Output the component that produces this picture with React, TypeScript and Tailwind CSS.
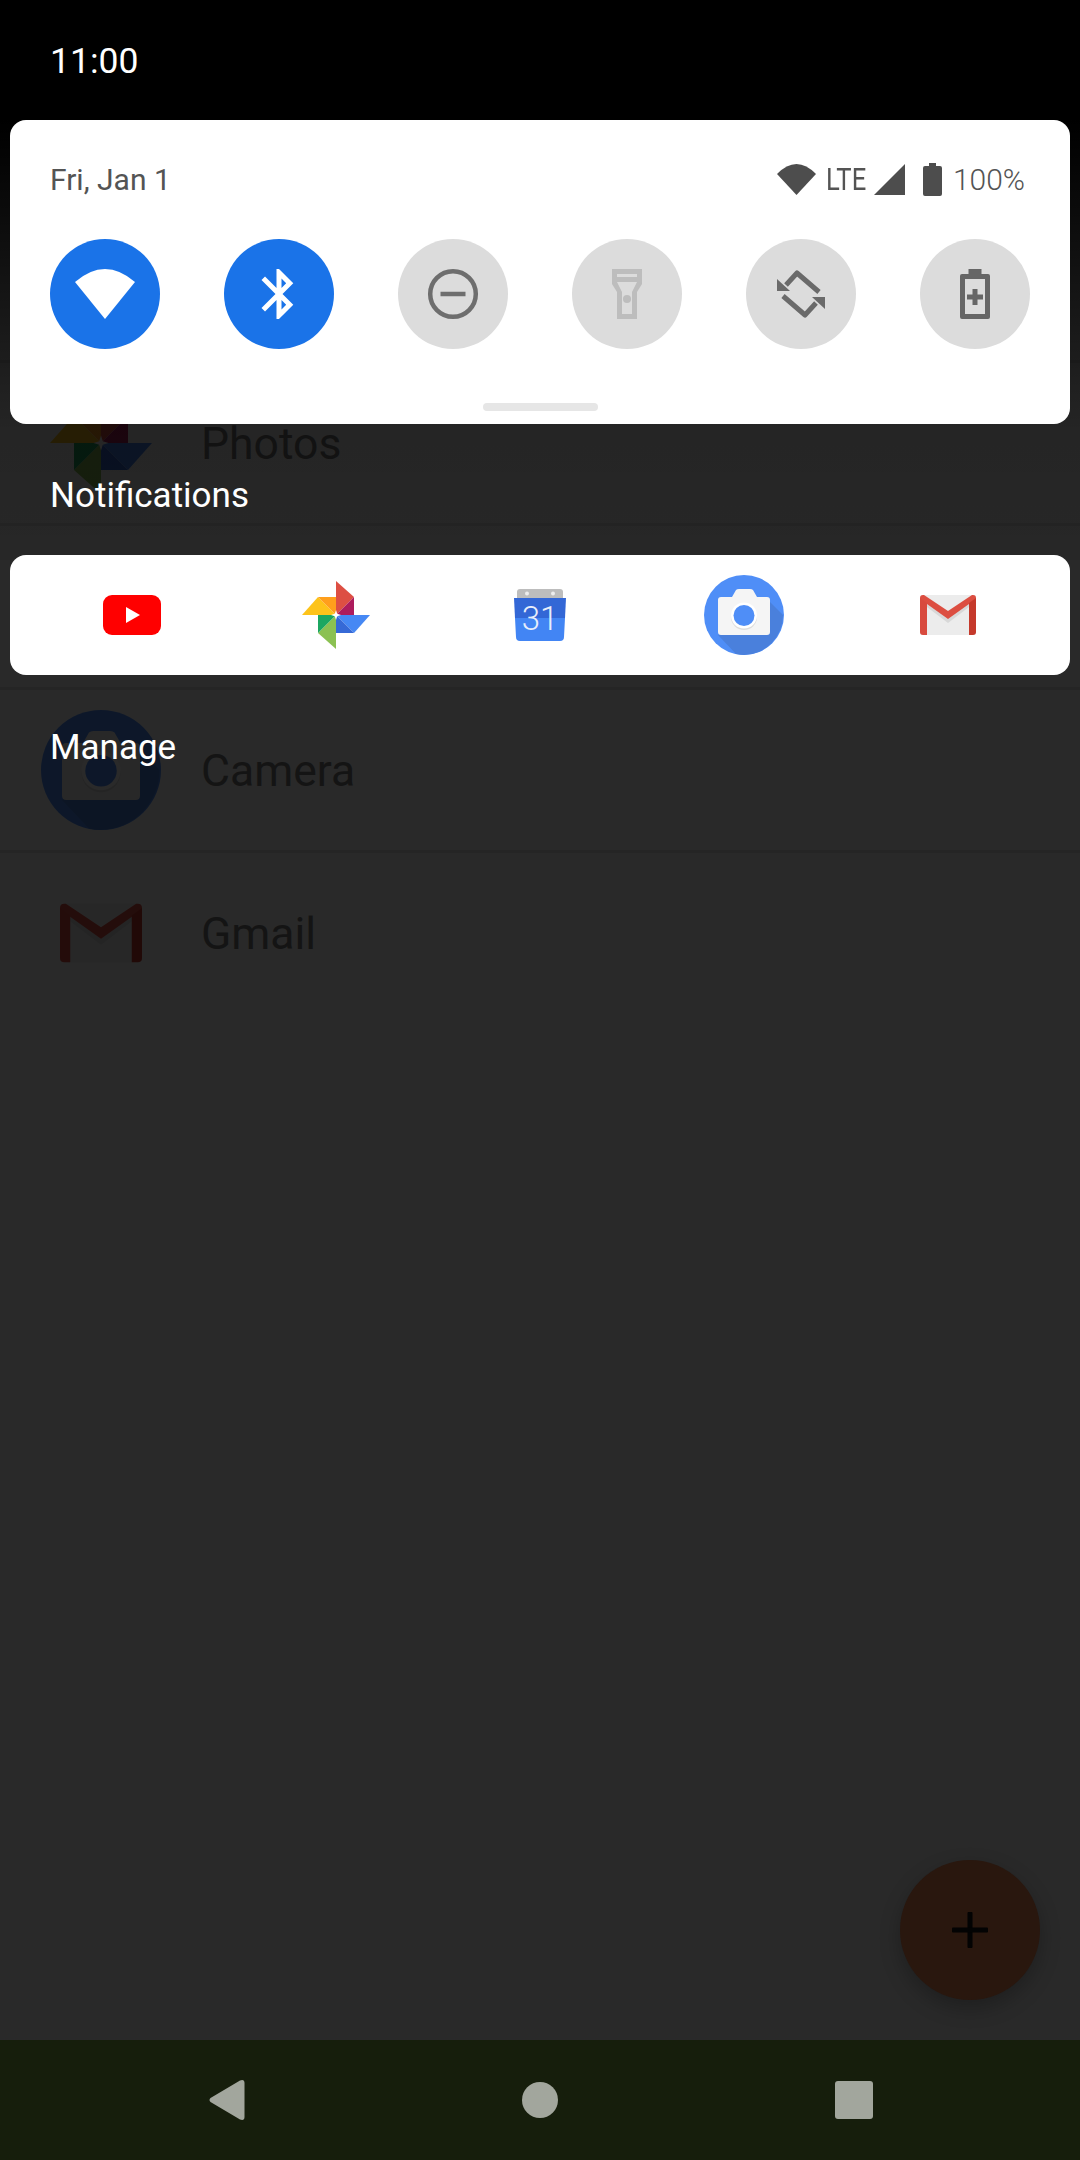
import type { ReactNode } from 'react';

function YouTubeIcon() {
  return (
    <svg width="58" height="40" viewBox="0 0 58 40">
      <rect width="58" height="40" rx="9" fill="#ff0000" />
      <path d="M23 12 L37 20 L23 28 Z" fill="#fff" />
    </svg>
  );
}

function PhotosIcon({ size = 68 }: { size?: number }) {
  return (
    <svg width={size} height={size} viewBox="-34 -34 68 68">
      <path d="M0 -34 L18 -18 L0 0 Z" fill="#dd4f43" />
      <path d="M18 -18 L18 0 L0 0 Z" fill="#ad1c5d" />
      <path d="M34 0 L18 18 L0 0 Z" fill="#4688f4" />
      <path d="M18 18 L0 18 L0 0 Z" fill="#3669d6" />
      <path d="M0 34 L-18 18 L0 0 Z" fill="#8bc152" />
      <path d="M-18 18 L-18 0 L0 0 Z" fill="#1ca761" />
      <path d="M-34 0 L-18 -18 L0 0 Z" fill="#fdc31a" />
      <path d="M-18 -18 L0 -18 L0 0 Z" fill="#ff9f1c" />
      <path d="M0 -5 L1.2 -1.2 L5 0 L1.2 1.2 L0 5 L-1.2 1.2 L-5 0 L-1.2 -1.2 Z" fill="#fff" />
    </svg>
  );
}

function CalendarIcon() {
  return (
    <svg width="52" height="52" viewBox="0 0 52 52">
      <path d="M3 3 Q3 0 6 0 H46 Q49 0 49 3 V10 H3 Z" fill="#bdbdbd" />
      <circle cx="13" cy="4.5" r="2" fill="#eeeeee" />
      <circle cx="39" cy="4.5" r="2" fill="#eeeeee" />
      <path d="M0 9 H52 L51 29 H1 Z" fill="#3367d6" />
      <path d="M1 29 H51 L50 48 Q50 52 46 52 H6 Q2 52 2 48 Z" fill="#4285f4" />
      <text x="26" y="41" textAnchor="middle" fontSize="33" fontWeight="300" fontFamily="Roboto, sans-serif" fill="#e8eefb">
        31
      </text>
    </svg>
  );
}

function CameraIcon({ size = 80 }: { size?: number }) {
  return (
    <svg width={size} height={size} viewBox="0 0 80 80">
      <circle cx="40" cy="40" r="40" fill="#4f8ef7" />
      <path d="M66 27 L79 40 A40 40 0 0 1 40 80 Q36 80 32 79 L14 60 Z" fill="#4a80dc" />
      <path d="M17 22 H28 L32 15 Q33 14 35 14 H46 Q48 14 49 15 L53 22 H63 Q66 22 66 25 V57 Q66 60 63 60 H17 Q14 60 14 57 V25 Q14 22 17 22 Z" fill="#f5f5f5" />
      <circle cx="40" cy="42" r="13" fill="#dddddd" />
      <circle cx="40" cy="40.5" r="13" fill="#fff" />
      <circle cx="40" cy="40.5" r="10.5" fill="#4f8ef7" />
    </svg>
  );
}

function GmailIcon({ width = 56, height = 40 }: { width?: number; height?: number }) {
  return (
    <svg width={width} height={height} viewBox="0 0 56 40">
      <rect width="56" height="40" rx="2" fill="#ececec" />
      <path d="M7 8 L28 24 L49 8 V12 L28 28 L7 12 Z" fill="#d8d8d8" />
      <path d="M0 3 Q0 0 3 0 H4 L28 16 L52 0 H53 Q56 0 56 3 V4 L28 24 L0 4 Z" fill="#dc4e41" />
      <path d="M0 3 L7 8 V40 H3 Q0 40 0 37 Z" fill="#d84a3e" />
      <path d="M56 3 L49 8 V40 H53 Q56 40 56 37 Z" fill="#c5392b" />
    </svg>
  );
}

function QuickTile({ active = false, children }: { active?: boolean; children: ReactNode }) {
  return (
    <div
      className={`flex h-[110px] w-[110px] items-center justify-center rounded-full ${
        active ? 'bg-[#1a73e8]' : 'bg-[#dcdcdc]'
      }`}
    >
      {children}
    </div>
  );
}

function AppRow({ name, last = false, children }: { name: string; last?: boolean; children: ReactNode }) {
  return (
    <div
      className={`flex h-[163.5px] items-center border-b-[3px] ${last ? 'border-transparent' : 'border-[#252525]'}`}
    >
      <div className="flex w-[201px] shrink-0 justify-center brightness-[.165]">{children}</div>
      <span className="pt-[3px] text-[44.5px] text-[#141414]">{name}</span>
    </div>
  );
}

export default function App() {
  return (
    <div className="relative h-[2160px] w-[1080px] overflow-hidden bg-[#292929] font-['Roboto',sans-serif]">
      {/* app list dimmed behind the shade */}
      <div className="pt-[199px]">
        <AppRow name="YouTube">
          <YouTubeIcon />
        </AppRow>
        <AppRow name="Photos">
          <PhotosIcon size={102} />
        </AppRow>
        <AppRow name="Calendar">
          <CalendarIcon />
        </AppRow>
        <AppRow name="Camera">
          <CameraIcon size={120} />
        </AppRow>
        <AppRow name="Gmail" last>
          <GmailIcon width={82} height={60} />
        </AppRow>
      </div>

      {/* FAB */}
      <div className="absolute left-[900px] top-[1860px] flex h-[140px] w-[140px] items-center justify-center rounded-full bg-[#29170e] shadow-[0_8px_20px_rgba(0,0,0,0.25)]">
        <svg width="36" height="36" viewBox="0 0 36 36" fill="#030303">
          <rect x="15.5" y="0" width="5" height="36" rx="1" />
          <rect x="0" y="15.5" width="36" height="5" rx="1" />
        </svg>
      </div>

      {/* nav bar */}
      <div className="absolute bottom-0 left-0 flex h-[120px] w-full items-center justify-center gap-[277px] bg-[#161e0c] pl-[1px]">
        <svg width="36" height="40" viewBox="0 0 36 40" fill="#a2a69d">
          <path d="M31 0.5 Q35.5 -1 35.5 3 V37 Q35.5 41 31 39.5 L1.5 22 Q-0.5 20 1.5 18 Z" />
        </svg>
        <div className="h-9 w-9 rounded-full bg-[#a2a69d]" />
        <div className="h-[38px] w-[38px] rounded-[3px] bg-[#a2a69d]" />
      </div>

      {/* top fade of the notification shade */}
      <div className="absolute inset-x-0 top-0 h-[560px] bg-[linear-gradient(to_bottom,#000_120px,rgba(0,0,0,0.1)_430px,rgba(0,0,0,0.05)_560px)]" />

      {/* shade content */}
      <div className="absolute inset-x-0 top-0 flex flex-col">
        <div className="flex h-[120px] items-center pl-[50px] pt-[3px] text-[35.5px] text-white">11:00</div>

        <div className="mx-[10px] flex h-[304px] flex-col rounded-2xl bg-white px-[40px] pt-[39px]">
          <div className="flex h-[40px] items-center justify-between pr-[5px] text-[#545454]">
            <span className="text-[30px]">Fri, Jan 1</span>
            <div className="flex items-center">
              <svg width="39" height="31" viewBox="0 0 39 31" fill="#4d4d4d">
                <path d="M0 10 Q19.5 -10 39 10 L19.5 31 Z" />
              </svg>
              <span className="ml-[10px] w-[41px] origin-left scale-x-[.8] text-[32px]">LTE</span>
              <svg className="ml-[7px]" width="31" height="31" viewBox="0 0 31 31" fill="#4d4d4d">
                <path d="M31 0 V31 H0 Z" />
              </svg>
              <svg className="ml-[18px]" width="19" height="33" viewBox="0 0 19 33" fill="#4d4d4d">
                <path d="M6 0 H13 V3 H17 Q19 3 19 5 V31 Q19 33 17 33 H2 Q0 33 0 31 V5 Q0 3 2 3 H6 Z" />
              </svg>
              <span className="ml-[11px] text-[30px] font-light">100%</span>
            </div>
          </div>

          <div className="mt-[40px] flex justify-between">
            <QuickTile active>
              <svg width="60" height="50" viewBox="0 0 60 50" fill="#fff">
                <path d="M0 13 Q30 -13 60 13 L30 50 Z" />
              </svg>
            </QuickTile>
            <QuickTile active>
              <svg width="60" height="60" viewBox="0 0 24 24" fill="#fff">
                <path d="M17.71 7.71L12 2h-1v7.59L6.41 5 5 6.41 10.59 12 5 17.59 6.41 19 11 14.41V22h1l5.71-5.71-4.3-4.29 4.3-4.29zM13 5.83l1.88 1.88L13 9.59V5.83zm1.88 10.46L13 18.17v-3.76l1.88 1.88z" />
              </svg>
            </QuickTile>
            <QuickTile>
              <svg width="52" height="52" viewBox="0 0 52 52" fill="none" stroke="#6e6e6e" strokeWidth="4.5">
                <circle cx="26" cy="26" r="22.8" />
                <path d="M13.5 26 H38.5" />
              </svg>
            </QuickTile>
            <QuickTile>
              <svg width="30" height="50" viewBox="0 0 30 50" fill="#bdbdbd" fillRule="evenodd">
                <path d="M0 0 H30 V15 L25 23 V50 H5 V23 L0 15 Z M5 5 V8 H25 V5 Z M5 13 L10 23 V45 H20 V23 L25 13 Z" />
                <circle cx="15" cy="30" r="4" />
              </svg>
            </QuickTile>
            <QuickTile>
              <svg width="60" height="60" viewBox="-30 -30 60 60" fill="#6a6a6a">
                <g>
                  <path d="M-15 -9 L-4 -21 L18 -2" fill="none" stroke="#6a6a6a" strokeWidth="5" strokeLinejoin="round" />
                  <path d="M-24 -3 V-15 L-11 -3 Z" />
                </g>
                <g transform="rotate(180)">
                  <path d="M-15 -9 L-4 -21 L18 -2" fill="none" stroke="#6a6a6a" strokeWidth="5" strokeLinejoin="round" />
                  <path d="M-24 -3 V-15 L-11 -3 Z" />
                </g>
              </svg>
            </QuickTile>
            <QuickTile>
              <svg width="30" height="50" viewBox="0 0 30 50" fill="#666666" fillRule="evenodd">
                <path d="M8.5 0 H21.5 V5 H28 Q30 5 30 7 V48 Q30 50 28 50 H2 Q0 50 0 48 V7 Q0 5 2 5 H8.5 Z M5 10 V45 H25 V10 Z" />
                <path d="M12.5 20 H17.5 V25.5 H23 V30.5 H17.5 V36 H12.5 V30.5 H7 V25.5 H12.5 Z" />
              </svg>
            </QuickTile>
          </div>

          <div className="mx-auto mt-[54px] h-2 w-[115px] rounded bg-[#e6e6e6]" />
        </div>

        <div className="mt-[51px] pl-[50px] text-[35px] leading-[42px] text-white">Notifications</div>

        <div className="mx-[10px] mt-[38px] grid h-[120px] grid-cols-5 items-center justify-items-center rounded-2xl bg-white px-[20px]">
          <YouTubeIcon />
          <PhotosIcon />
          <CalendarIcon />
          <CameraIcon />
          <GmailIcon />
        </div>

        <div className="mt-[52px] pl-[50px] text-[35px] leading-[42px] text-white">Manage</div>
      </div>
    </div>
  );
}
